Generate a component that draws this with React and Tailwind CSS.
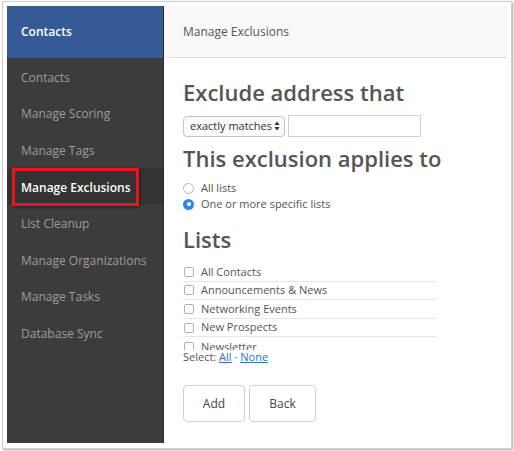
import React from "react";

const NAV = [
  "Contacts",
  "Manage Scoring",
  "Manage Tags",
  "Manage Exclusions",
  "List Cleanup",
  "Manage Organizations",
  "Manage Tasks",
  "Database Sync",
];

const LISTS = ["All Contacts", "Announcements & News", "Networking Events", "New Prospects", "Newsletter"];

function Sidebar() {
  return (
    <div className="w-[157px] shrink-0 bg-[#3c3c3c] border-r border-[#2a2a2a] flex flex-col">
      <div className="h-[52px] bg-[#355b96] flex items-center pl-[14px] text-[12px] font-semibold text-white">
        Contacts
      </div>
      {NAV.map((item) => {
        const active = item === "Manage Exclusions";
        return (
          <div
            key={item}
            className={
              active
                ? "relative h-[36.6px] flex items-center pl-[14px] pt-[3px] text-[12px] font-semibold text-white bg-[#333333]"
                : "h-[36.6px] flex items-center pl-[14px] pt-[3px] text-[12px] text-[#9d9d9d]"
            }
          >
            {item}
            {active && (
              <span className="absolute left-[5px] top-0 w-[127px] h-[38px] border-[3px] border-[#e8151b] shadow-[1px_1px_2px_rgba(0,0,0,0.5)]" />
            )}
          </div>
        );
      })}
    </div>
  );
}

function Radio({ checked, label }) {
  return (
    <label className="flex items-center h-[16px] gap-[7px]">
      {checked ? (
        <span className="w-[11px] h-[11px] rounded-full bg-[#2f86f0] flex items-center justify-center">
          <span className="w-[4px] h-[4px] rounded-full bg-white" />
        </span>
      ) : (
        <span className="w-[11px] h-[11px] rounded-full border border-[#b5b5b5] bg-white" />
      )}
      <span className="text-[11px] text-[#555]">{label}</span>
    </label>
  );
}

export default function App() {
  return (
    <div
      className="w-[514px] h-[451px] bg-white pl-[2px] pt-[1px] overflow-hidden"
      style={{ fontFamily: '"Open Sans", "Noto Sans", sans-serif' }}
    >
      <div className="w-[510px] h-[448px] border border-[#cfcfcf] shadow-[1px_1px_2px_rgba(0,0,0,0.35)] pl-[4px] pt-[4px]">
        <div className="w-[500px] h-[437px] flex overflow-hidden">
          <Sidebar />
          <div className="flex-1 bg-white flex flex-col">
            <div className="h-[52px] bg-[#f9f9f9] border-b border-[#dcdcdc] flex items-center pl-[19px] text-[12px] text-[#555]">
              Manage Exclusions
            </div>
            <div className="pl-[19px] pt-[21px] flex flex-col">
              <h1 className="text-[22px] leading-[26px] font-semibold text-[#555]">Exclude address that</h1>
              <div className="flex items-center gap-[3px] mt-[10px]">
                <div className="h-[21px] w-[102px] border border-[#c4c4c4] rounded-[4px] bg-[#fafafa] flex items-center justify-between pl-[6px] pr-[4px] text-[11px] text-[#333]">
                  <span>exactly matches</span>
                  <svg width="6" height="10" viewBox="0 0 6 10">
                    <path d="M3 0.5 L5.6 4 H0.4 Z M3 9.5 L5.6 6 H0.4 Z" fill="#333" />
                  </svg>
                </div>
                <div className="h-[22px] w-[133px] border border-[#d0d0d0] bg-white" />
              </div>
              <h2 className="text-[22px] leading-[26px] font-semibold text-[#555] mt-[8px]">This exclusion applies to</h2>
              <div className="flex flex-col mt-[9px]">
                <Radio label="All lists" />
                <Radio checked label="One or more specific lists" />
              </div>
              <h2 className="text-[22px] leading-[26px] font-semibold text-[#555] mt-[14px]">Lists</h2>
              <div className="w-[254px] h-[87px] overflow-hidden mt-[11px]">
                {LISTS.map((l, i) => (
                  <div
                    key={l}
                    className={
                      i < LISTS.length - 1
                        ? "h-[18.6px] flex items-center gap-[7px] border-b border-[#e6e6e6]"
                        : "h-[18.6px] flex items-center gap-[7px] pt-[1px]"
                    }
                  >
                    <span className="ml-[1px] w-[10px] h-[10px] border border-[#b0b0b0] rounded-[2px] bg-white" />
                    <span className="text-[11px] text-[#555]">{l}</span>
                  </div>
                ))}
              </div>
              <div className="text-[11px] text-[#555] leading-[14px]">
                Select: <span className="text-[#2f6fc7] underline">All</span> ·{" "}
                <span className="text-[#2f6fc7] underline">None</span>
              </div>
              <div className="flex gap-[4px] mt-[21px]">
                <button className="w-[62px] h-[37px] border border-[#cfcfcf] rounded-[4px] bg-white text-[12px] text-[#444]">
                  Add
                </button>
                <button className="w-[67px] h-[37px] border border-[#cfcfcf] rounded-[4px] bg-white text-[12px] text-[#444]">
                  Back
                </button>
              </div>
            </div>
          </div>
        </div>
      </div>
    </div>
  );
}
